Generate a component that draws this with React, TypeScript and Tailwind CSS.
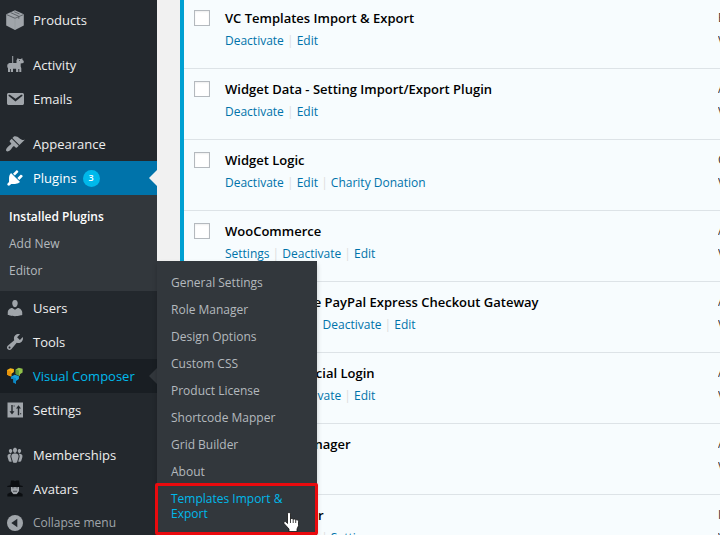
import type { ReactNode } from "react";

type Plugin = { name: string; actions: string[]; meta: string };

const plugins: Plugin[] = [
  { name: "VC Templates Import & Export", actions: ["Deactivate", "Edit"], meta: "E" },
  { name: "Widget Data - Setting Import/Export Plugin", actions: ["Deactivate", "Edit"], meta: "A" },
  { name: "Widget Logic", actions: ["Deactivate", "Edit", "Charity Donation"], meta: "C" },
  { name: "WooCommerce", actions: ["Settings", "Deactivate", "Edit"], meta: "A" },
  { name: "WooCommerce PayPal Express Checkout Gateway", actions: ["Settings", "Docs", "Deactivate", "Edit"], meta: "A" },
  { name: "WP Contact Social Login", actions: ["Settings", "Deactivate", "Edit"], meta: "A" },
  { name: "WP Layout Manager", actions: ["Deactivate"], meta: "A" },
  { name: "WP Link Builder", actions: ["Deactivate", "Edit", "Settings"], meta: "I" },
];

const flyoutItems = [
  "General Settings",
  "Role Manager",
  "Design Options",
  "Custom CSS",
  "Product License",
  "Shortcode Mapper",
  "Grid Builder",
  "About",
];

function Icon({ d, children }: { d?: string; children?: ReactNode }) {
  return (
    <svg viewBox="0 0 20 20" className="size-5 shrink-0 fill-current" aria-hidden="true">
      {d ? <path d={d} /> : children}
    </svg>
  );
}

const ProductsIcon = () => (
  <Icon>
    <path d="M10 .3 18.800 4.200v11.400L10 20 1.200 15.600V4.200z" />
    <path d="M1.600 4.600 10 8.300l8.400-3.700M5.600 2.600l8.200 3.700v2.400M9.300 1.800l5.200 2.200" fill="none" stroke="#4b5055" strokeWidth=".8" />
    <path d="M10 8.600V20" fill="none" stroke="#92979c" strokeWidth=".6" />
  </Icon>
);

const ActivityIcon = () => (
  <Icon>
    <path d="M7.200 1h1v7h3.300V5.200l1.300-2.200 1 .9h2.200l1.200-.8.400 2 1.200 1-.3 1.900-2.800.6v2.800l.6 1.900v3.700h-2v-3h-1v3h-2.200v-3.200H8v3.200H5.900v-3h-.8v3H3v-4.200l-.7-.4V9.200l.8.200V8.700L4.300 8h2.900z" />
    <path d="M14 5.200h.9v.9H14z" fill="#23282d" />
  </Icon>
);

const SettingsIcon = () => (
  <Icon>
    <path d="M2.500 2.500h15.500v15H2.500z" />
    <path d="M6.300 5h1.400v6.200h1.800L7 14.400l-2.500-3.200h1.800zM12.800 15.200h1.400V8.400H16l-2.500-3.200L11 8.400h1.800zM8.600 5.600h1v1h-1zM15 13.200h1.200v1H15z" fill="#23282d" />
  </Icon>
);

const ComposerIcon = () => (
  <Icon>
    <path d="m2 4 3.300-1.800 3.600.8v3L6.500 7.800v2.600L2 8.800z" fill="#f9b418" />
    <path d="m2 4 3.800 1.300v5.100L2 8.800z" fill="#e8940c" />
    <path d="m10.700 3.600 3-1.800 3.900 1v3.600l-2.700 1.800v1.800L10.700 8z" fill="#8fc04a" />
    <path d="m10.700 3.600 3.200 1v4.900L10.700 8z" fill="#5e9a3c" />
    <path d="m6 10.700 3.700-2 4.200 1.400v3l-3 1.800v2.900L8.400 16.500v-3.200L6 12.600z" fill="#1a9fd9" />
    <path d="m6 10.700 5 1.500v5.600L8.400 16.500v-3.200L6 12.600z" fill="#0b88c6" />
  </Icon>
);

const AvatarsIcon = () => (
  <Icon>
    <path d="M6 7.500h8v4.200l-1.700 3.800H7.700L6 11.700z" fill="#a0a5aa" />
    <path d="M6 1.600h2.600l1.400.7 1.400-.7H14l.7 4.600 3 .8v1H2.300V7l3-.8zM2.400 17.500v-2.600L6.300 13l2.200 2.200h3l2.200-2.200 3.900 1.900v2.600z" fill="#0b0e11" />
    <path d="M7 8.400h2.300v.8H7zm3.700 0H13v.8h-2.300zM8 11.800h4v.9H8z" fill="#4b5055" />
  </Icon>
);

const CollapseIcon = () => (
  <Icon>
    <circle cx="10" cy="10" r="8" />
    <path d="M12.300 5.800v8.400L6.300 10z" fill="#23282d" />
  </Icon>
);

const paths = {
  email:
    "M3.870 4h13.250C18.370 4 19 4.590 19 5.790v8.420c0 1.190-.63 1.790-1.880 1.790H3.870c-1.250 0-1.880-.6-1.880-1.790V5.790c0-1.200.63-1.790 1.880-1.790zm6.620 8.600l6.740-5.530c.24-.2.43-.66.13-1.070-.29-.41-.82-.42-1.170-.17l-5.700 3.860L4.800 5.830c-.35-.25-.88-.24-1.170.17-.3.41-.11.87.13 1.070z",
  appearance:
    "M14.480 11.060L7.410 3.990l1.500-1.500c.5-.56 2.300-.47 3.510.32 1.210.8 1.430 1.280 2.910 2.100 1.180.64 2.450 1.260 4.450.85zm-.71.71L6.700 4.700 4.930 6.470c-.39.39-.39 1.020 0 1.410l1.060 1.060c.39.39.39 1.030 0 1.420-.6.6-1.430 1.110-2.210 1.690-.35.26-.7.53-1.010.84C1.430 14.230.4 16.080 1.400 17.070c.99 1 2.840-.03 4.180-1.360.31-.31.58-.66.85-1.020.57-.78 1.080-1.610 1.690-2.210.39-.39 1.020-.39 1.410 0l1.060 1.060c.39.39 1.020.39 1.410 0z",
  plugins:
    "M13.110 4.360L9.870 7.600 8 5.730l3.240-3.240c.35-.34 1.050-.2 1.560.32.52.51.66 1.210.31 1.550zm-8 1.770l.91-1.120 9.010 9.010-1.190.84c-.71.71-2.630 1.160-3.820 1.160H6.140L4.900 17.260c-.59.59-1.540.59-2.120 0-.59-.58-.59-1.530 0-2.120l1.240-1.240v-3.880c0-1.130.4-3.190 1.090-3.890zm7.260 3.970l3.240-3.240c.34-.35 1.040-.21 1.550.31.52.51.66 1.210.31 1.550l-3.240 3.250z",
  users:
    "M10 9.250c-2.270 0-2.730-3.440-2.730-3.440C7 4.020 7.820 2 9.970 2c2.160 0 2.980 2.020 2.710 3.810 0 0-.41 3.440-2.680 3.440zm0 2.570L12.720 10c2.390 0 4.520 2.330 4.520 4.530v2.490s-3.650 1.130-7.240 1.130c-3.650 0-7.240-1.130-7.240-1.130v-2.490c0-2.250 1.940-4.480 4.470-4.480z",
  tools:
    "M16.680 9.770c-1.340 1.340-3.300 1.670-4.950.99l-5.410 6.520c-.99.99-2.590.99-3.580 0s-.99-2.590 0-3.570l6.520-5.420c-.68-1.650-.35-3.610.99-4.950 1.280-1.280 3.120-1.620 4.720-1.060l-2.890 2.890 2.820 2.820 2.860-2.870c.53 1.580.18 3.390-1.080 4.650zM3.810 16.210c.4.39 1.040.39 1.430 0 .4-.4.4-1.040 0-1.430-.39-.4-1.030-.4-1.430 0-.39.39-.39 1.030 0 1.430z",
  groups:
    "M8.030 4.460c-.29 1.280.55 3.460 1.970 3.460 1.410 0 2.250-2.180 1.960-3.460-.22-.98-1.080-1.630-1.960-1.630-.89 0-1.740.65-1.970 1.630zm-4.130.9c-.25 1.080.47 2.930 1.670 2.930s1.920-1.850 1.670-2.930c-.19-.83-.92-1.390-1.670-1.390s-1.480.56-1.670 1.390zm8.860 0c-.25 1.080.47 2.930 1.660 2.930 1.200 0 1.920-1.850 1.670-2.930-.19-.83-.92-1.390-1.670-1.390-.74 0-1.470.56-1.660 1.390zm-.59 11.430l1.250-4.300C14.200 10 12.710 8.470 10 8.470c-2.720 0-4.210 1.530-3.440 4.020l1.260 4.300C8.050 17.510 9 18 10 18c.98 0 1.940-.49 2.170-1.210zm-6.100-7.630c-.49.67-.96 1.830-.42 3.590l1.120 3.790c-.34.2-.77.31-1.200.31-.85 0-1.650-.41-1.850-1.030l-1.070-3.650c-.65-2.110.61-3.400 2.920-3.400.27 0 .54.02.79.06-.1.1-.2.22-.29.33zm8.350-.39c2.310 0 3.580 1.290 2.920 3.400l-1.070 3.650c-.2.62-1 1.030-1.850 1.030-.43 0-.86-.11-1.200-.31l1.110-3.770c.55-1.780.08-2.940-.42-3.610-.08-.11-.18-.23-.28-.33.25-.04.51-.06.79-.06z",
};

function MenuItem({ icon, label }: { icon: ReactNode; label: string }) {
  return (
    <li>
      <a href="#" className="flex h-[34px] items-center gap-2 pl-[5px] text-[#eeeeee]">
        <span className="text-[#a0a5aa]">{icon}</span>
        {label}
      </a>
    </li>
  );
}

function Pointer() {
  return (
    <svg viewBox="0 0 17 20" className="absolute right-[17px] bottom-[-5px] h-5 w-[17px]" aria-hidden="true">
      <path
        d="M4.500 2c0-2 3-2 3 0v5c.6-.9 2.500-.7 2.700.5.700-.8 2.300-.5 2.500.6 1-.7 2.800-.2 2.800 1.400v4.200L14 17v2.500H6V17L1 11.500C.3 10 2 8.800 3.200 10l1.300 1.500z"
        fill="#fff"
        stroke="#111"
        strokeWidth=".8"
      />
      <path d="M7.500 7v4M10.200 7.500V11M12.700 8.100V11" stroke="#111" strokeWidth=".8" />
    </svg>
  );
}

function Flyout() {
  return (
    <ul className="absolute top-[-98px] left-full z-10 w-40 bg-[#32373c] py-2 text-[12px] leading-[15px] text-[#b4b9be] shadow-[0_3px_5px_rgba(0,0,0,0.2)]">
      {flyoutItems.map((item) => (
        <li key={item}>
          <a href="#" className="block px-3.5 py-1.5">
            {item}
          </a>
        </li>
      ))}
      <li className="relative">
        <a href="#" className="block px-3.5 py-1.5 text-[#00b9eb]">
          Templates Import &amp;
          <br />
          Export
        </a>
        <span className="pointer-events-none absolute -top-0.5 -right-px -bottom-2 -left-0.5 rounded-xs border-3 border-[#ea0a0e]" />
        <Pointer />
      </li>
    </ul>
  );
}

function Sidebar() {
  return (
    <nav className="relative z-10 w-[157px] shrink-0 bg-[#23282d] pt-[3px] text-[13px] leading-[18px]" aria-label="Main menu">
      <ul className="mb-[11px]">
        <MenuItem icon={<ProductsIcon />} label="Products" />
      </ul>
      <ul className="mb-[11px]">
        <MenuItem icon={<ActivityIcon />} label="Activity" />
        <MenuItem icon={<Icon d={paths.email} />} label="Emails" />
      </ul>
      <ul className="mb-[11px]">
        <MenuItem icon={<Icon d={paths.appearance} />} label="Appearance" />
        <li>
          <a href="#" className="relative flex h-[34px] items-center gap-2 bg-[#0073aa] pl-[5px] text-white">
            <Icon d={paths.plugins} />
            <span className="flex items-center gap-1.5">
              Plugins
              <span className="flex size-[17px] items-center justify-center rounded-full bg-[#00b9eb] text-[9px] font-semibold">3</span>
            </span>
            <span className="absolute right-0 border-y-8 border-r-8 border-y-transparent border-r-[#f1f1f1]" />
          </a>
          <ul className="bg-[#32373c] pt-2 pb-[7px] text-[12px] leading-[15px] text-[#b4b9be]">
            <li>
              <a href="#" className="block px-[9px] py-1.5 font-semibold text-white">Installed Plugins</a>
            </li>
            <li>
              <a href="#" className="block px-[9px] py-1.5">Add New</a>
            </li>
            <li>
              <a href="#" className="block px-[9px] py-1.5">Editor</a>
            </li>
          </ul>
        </li>
        <MenuItem icon={<Icon d={paths.users} />} label="Users" />
        <MenuItem icon={<Icon d={paths.tools} />} label="Tools" />
        <li className="relative">
          <a href="#" className="relative flex h-[34px] items-center gap-2 bg-[#191e23] pl-[5px] text-[#00b9eb]">
            <ComposerIcon />
            Visual Composer
            <span className="absolute right-0 border-y-8 border-r-8 border-y-transparent border-r-[#32373c]" />
          </a>
          <Flyout />
        </li>
        <MenuItem icon={<SettingsIcon />} label="Settings" />
      </ul>
      <ul>
        <MenuItem icon={<Icon d={paths.groups} />} label="Memberships" />
        <MenuItem icon={<AvatarsIcon />} label="Avatars" />
      </ul>
      <button type="button" className="flex h-[34px] items-center gap-2 pl-[5px] text-[12px] text-[#a0a5aa]">
        <CollapseIcon />
        Collapse menu
      </button>
    </nav>
  );
}

function PluginRow({ plugin, first }: { plugin: Plugin; first: boolean }) {
  const cell = `border-b border-[#dde3e7] p-0 ${first ? "pt-2" : "pt-2.5"}`;
  return (
    <tr className={`align-top ${first ? "h-[69px]" : "h-[71px]"}`}>
      <td className={`w-[41px] ${cell}`}>
        <input
          type="checkbox"
          aria-label={`Select ${plugin.name}`}
          className="mt-0.5 ml-2.5 block size-4 appearance-none border border-[#b4b9be] bg-white shadow-[inset_0_1px_2px_rgba(0,0,0,0.07)]"
        />
      </td>
      <td className={`whitespace-nowrap ${cell}`}>
        <strong className="block text-[13px] leading-5 font-semibold text-black">{plugin.name}</strong>
        <div className="mt-[3px] text-[12px] leading-5">
          {plugin.actions.map((action, i) => (
            <span key={action}>
              {i > 0 && <span className="text-[#dddddd]"> | </span>}
              <a href="#" className="text-[#0073aa]">{action}</a>
            </span>
          ))}
        </div>
      </td>
      <td className={`w-0.5 overflow-hidden text-[12px] leading-5 text-[#333333] ${cell}`}>
        <p>{plugin.meta}</p>
        <p className="mt-[3px]">V</p>
      </td>
    </tr>
  );
}

export default function App() {
  return (
    <div className="flex h-screen overflow-hidden bg-[#f1f1f1] font-['Open_Sans','Noto_Sans',sans-serif]">
      <Sidebar />
      <main className="min-w-0 flex-1 pl-[23px]">
        <div className="border-l-4 border-[#00a0d2] bg-[#f7fcfe]">
          <table className="w-full table-fixed border-separate border-spacing-0">
            <tbody>
              {plugins.map((plugin, i) => (
                <PluginRow key={plugin.name} plugin={plugin} first={i === 0} />
              ))}
            </tbody>
          </table>
        </div>
      </main>
    </div>
  );
}
